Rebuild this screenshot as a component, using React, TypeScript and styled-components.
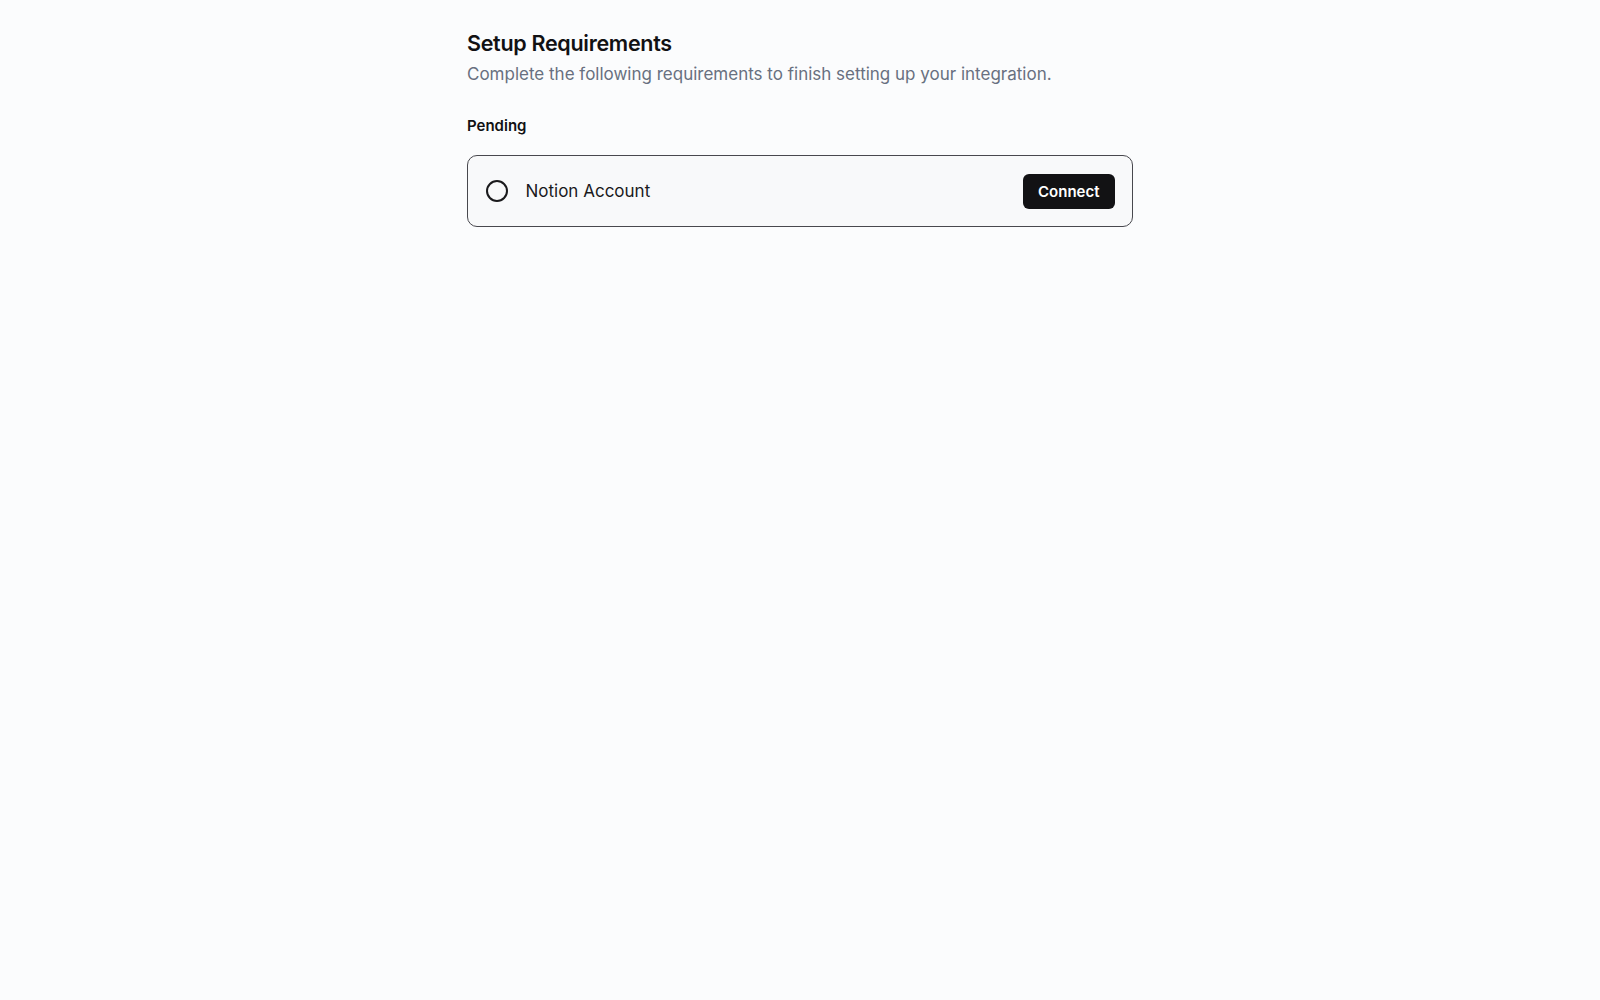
import React from "react";
import styled, { createGlobalStyle } from "styled-components";

const Global = createGlobalStyle`
  html, body { margin: 0; padding: 0; background: #fbfcfd; }
  body { font-family: Inter, "Noto Sans", sans-serif; color: #111113; -webkit-font-smoothing: antialiased; }
`;

const Page = styled.div`
  min-height: 1000px;
  padding: 30px 0 0;
  box-sizing: border-box;
  display: flex;
  justify-content: center;
`;

const Content = styled.div`
  width: 666px;
  display: flex;
  flex-direction: column;
`;

const Title = styled.h1`
  margin: 0;
  font-size: 21.5px;
  line-height: 26px;
  font-weight: 600;
  letter-spacing: -0.3px;
  color: #111113;
`;

const Subtitle = styled.p`
  margin: 6px 0 0;
  font-size: 17px;
  line-height: 24px;
  color: #687080;
`;

const SectionLabel = styled.h2`
  margin: 30px 0 0;
  font-size: 15px;
  line-height: 20px;
  font-weight: 600;
  color: #111113;
`;

const Card = styled.div`
  margin-top: 19px;
  height: 72px;
  box-sizing: border-box;
  border: 1.5px solid #48484e;
  border-radius: 10px;
  background: #f8f9fa;
  display: flex;
  align-items: center;
  padding: 0 17.5px;
  gap: 18px;
`;

const Circle = styled.span`
  width: 22px;
  height: 22px;
  box-sizing: border-box;
  border: 2px solid #1a1a1c;
  border-radius: 50%;
  flex: none;
`;

const ItemName = styled.span`
  flex: 1;
  font-size: 17px;
  line-height: 24px;
  color: #1a1a1c;
`;

const Button = styled.button`
  height: 35px;
  padding: 0 15px;
  border: none;
  border-radius: 6px;
  background: #121214;
  color: #ffffff;
  font-family: inherit;
  font-size: 15px;
  font-weight: 600;
  cursor: pointer;
`;

export default function App() {
  return (
    <>
      <Global />
      <Page>
        <Content>
          <Title>Setup Requirements</Title>
          <Subtitle>Complete the following requirements to finish setting up your integration.</Subtitle>
          <SectionLabel>Pending</SectionLabel>
          <Card>
            <Circle />
            <ItemName>Notion Account</ItemName>
            <Button>Connect</Button>
          </Card>
        </Content>
      </Page>
    </>
  );
}
